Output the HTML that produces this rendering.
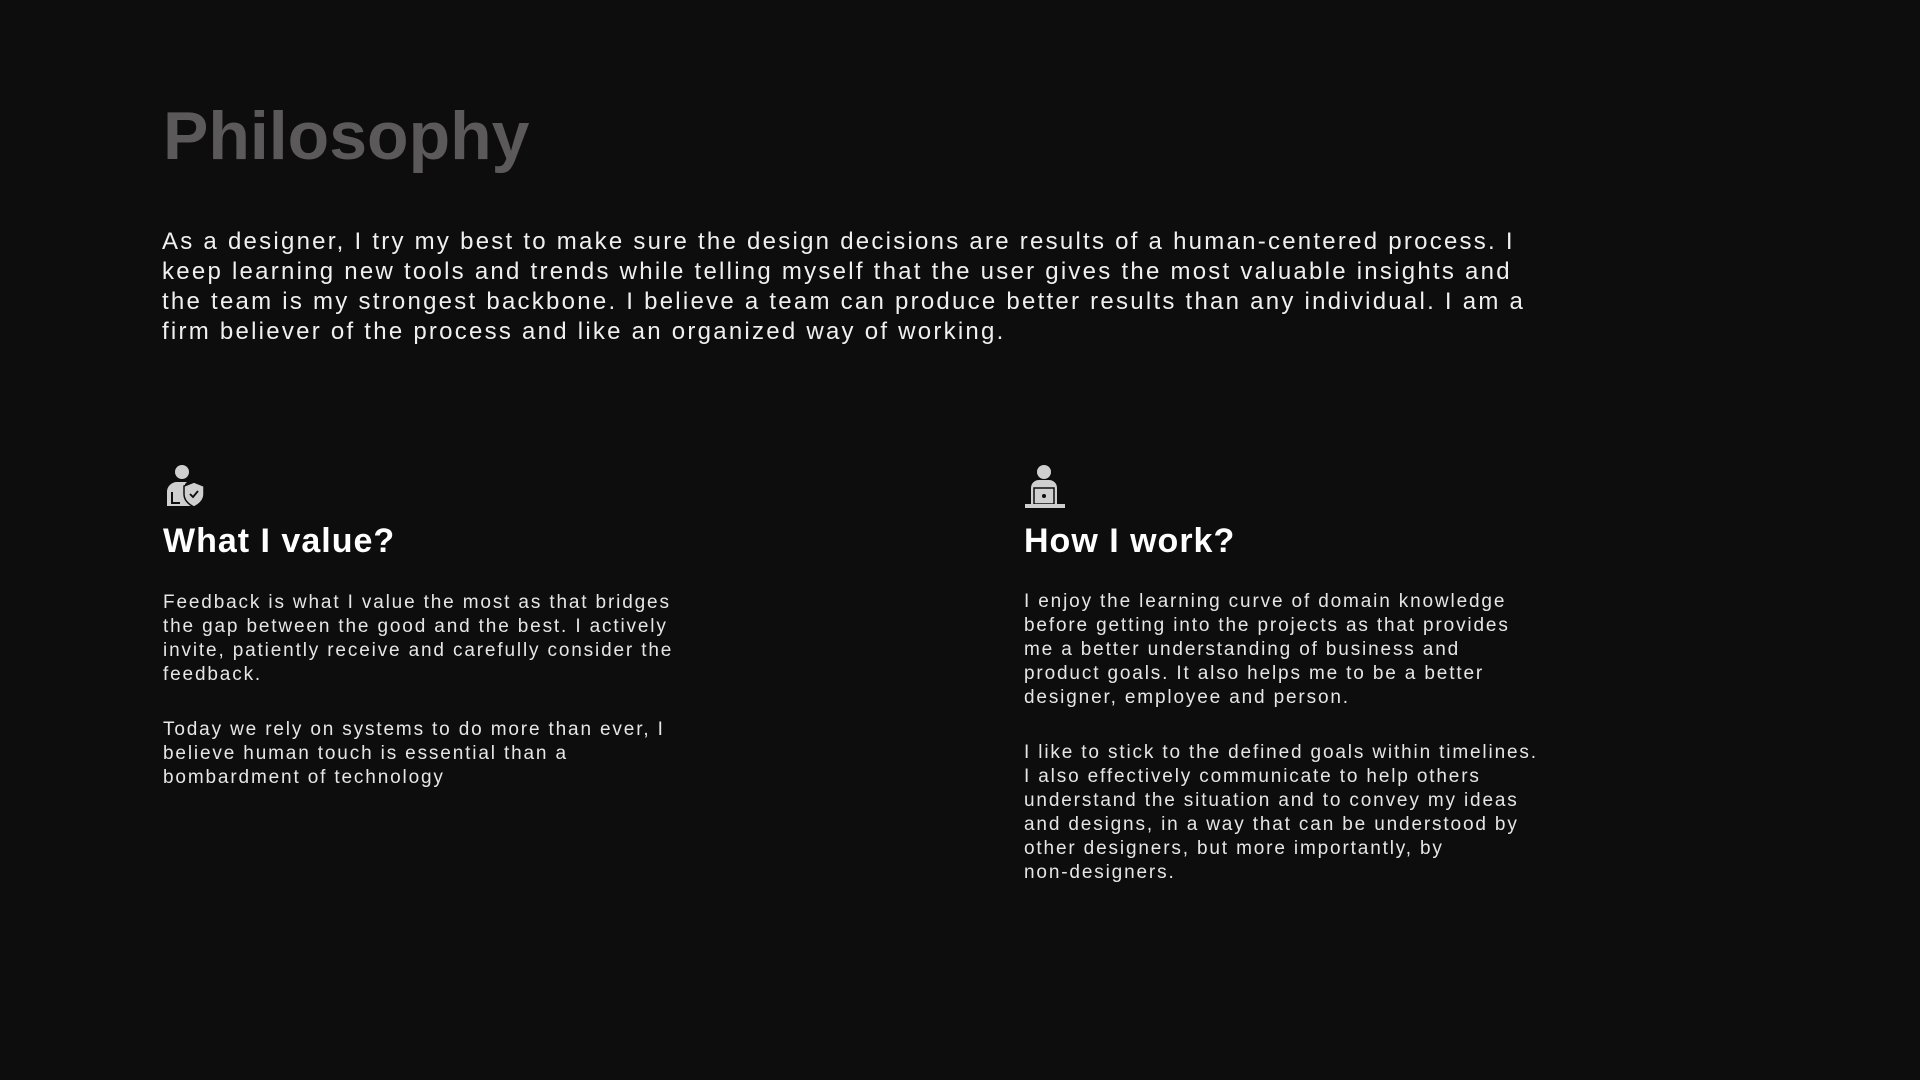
<!DOCTYPE html>
<html><head><meta charset="utf-8"><style>
html,body{margin:0;padding:0;background:#0d0d0d;width:1920px;height:1080px;overflow:hidden;font-family:"Liberation Sans",sans-serif;}
.t{position:absolute;left:163px;top:96px;margin:0;font-size:68px;font-weight:bold;color:#5b5959;letter-spacing:0px;line-height:80px;}
.intro{position:absolute;left:162px;top:227px;font-size:24px;line-height:30px;color:#f0f0f0;letter-spacing:2.25px;margin:0;white-space:nowrap;}
.col{position:absolute;top:464px;color:#e6e6e6;}
.col h2{margin:0;position:absolute;top:57px;font-size:34px;font-weight:bold;color:#fff;white-space:nowrap;line-height:40px;letter-spacing:1px;}
.col p{margin:0;font-size:19px;line-height:24px;letter-spacing:1.85px;white-space:nowrap;}
.c1{left:163px;width:530px}.c2{left:1024px;width:540px}
</style></head><body>
<h1 class="t">Philosophy</h1>
<p class="intro">As a designer, I try my best to make sure the design decisions are results of a human-centered process. I<br>keep learning new tools and trends while telling myself that the user gives the most valuable insights and<br>the team is my strongest backbone. I believe a team can produce better results than any individual. I am a<br>firm believer of the process and like an organized way of working.</p>
<div class="col c1">
<svg width="42" height="44" viewBox="0 0 42 44" style="position:absolute;top:0;left:0"><circle cx="19" cy="8" r="7" fill="#cfcfcf"/><path d="M4 42V28c0-6 5-10 10-10h10l-2 2v8c0 6 3 10 6 14Z" fill="#cfcfcf"/><path d="M9 28v11h8" stroke="#0d0d0d" stroke-width="2" fill="none"/><path d="M31 18l10 4v8c0 6-4 10-10 13-6-3-10-7-10-13v-8Z" fill="#cfcfcf" stroke="#0d0d0d" stroke-width="1.5"/><path d="M27 30l3 3 5-6" stroke="#0d0d0d" stroke-width="1.8" fill="none"/></svg>
<h2>What I value?</h2>
<div style="position:absolute;top:127px;width:530px">
<p>Feedback is what I value the most as that bridges<br>the gap between the good and the best. I actively<br>invite, patiently receive and carefully consider the<br>feedback.</p>
<p style="margin-top:31px">Today we rely on systems to do more than ever, I<br>believe human touch is essential than a<br>bombardment of technology</p>
</div></div>
<div class="col c2">
<svg width="42" height="44" viewBox="0 0 42 44" style="position:absolute;top:0;left:0"><circle cx="20" cy="8" r="7" fill="#cfcfcf"/><path d="M7 40V24c0-5 4-8 8-8h10c4 0 8 3 8 8v16Z" fill="#cfcfcf"/><rect x="10" y="24" width="20" height="16" fill="#cfcfcf" stroke="#0d0d0d" stroke-width="1.5"/><circle cx="20" cy="32" r="2" fill="#0d0d0d"/><rect x="1" y="40" width="40" height="4" fill="#cfcfcf"/></svg>
<h2>How I work?</h2>
<div style="position:absolute;top:126px;width:540px">
<p>I enjoy the learning curve of domain knowledge<br>before getting into the projects as that provides<br>me a better understanding of business and<br>product goals. It also helps me to be a better<br>designer, employee and person.</p>
<p style="margin-top:31px">I like to stick to the defined goals within timelines.<br>I also effectively communicate to help others<br>understand the situation and to convey my ideas<br>and designs, in a way that can be understood by<br>other designers, but more importantly, by<br>non-designers.</p>
</div></div>
</body></html>
